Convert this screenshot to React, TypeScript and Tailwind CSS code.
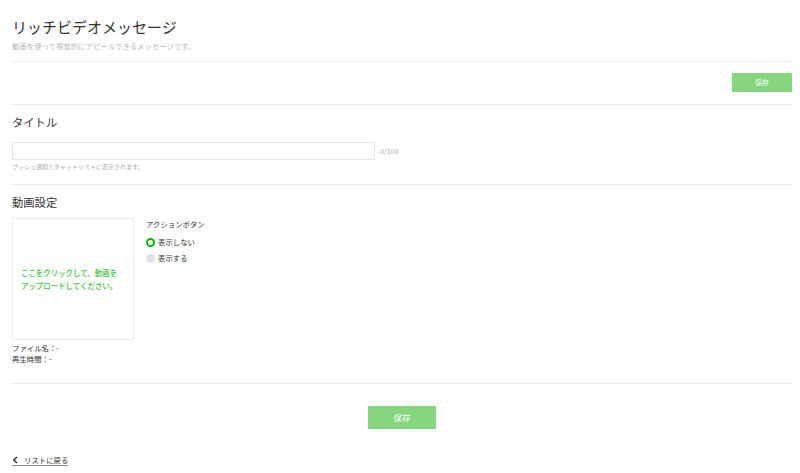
import React from "react";

const font = { fontFamily: '"Noto Sans CJK JP", "Noto Sans", sans-serif' };

function Radio({ checked, label }: { checked: boolean; label: string }) {
  return (
    <div className="flex items-center h-[16px]">
      {checked ? (
        <span className="w-[9px] h-[9px] rounded-full border-[2.5px] border-[#00b900] bg-white box-border" />
      ) : (
        <span className="w-[9px] h-[9px] rounded-full bg-[#dfe2e8]" />
      )}
      <span className="ml-[3px] text-[7.4px] leading-[10px] text-[#333]">{label}</span>
    </div>
  );
}

export default function App() {
  return (
    <div style={font} className="w-[800px] h-[473px] bg-white overflow-hidden pl-[12px] pr-[8px] text-[#333] leading-none">
      <div className="pt-[17px]">
        <h1 className="text-[15px] leading-[20px] font-normal text-[#333]">リッチビデオメッセージ</h1>
        <p className="mt-[4px] text-[7.4px] leading-[10px] text-[#b4b9c0]">動画を使って視覚的にアピールできるメッセージです。</p>
      </div>
      <div className="mt-[10px] border-t border-[#efefef]" />
      <div className="flex justify-end pt-[11px] pb-[12px]">
        <button className="w-[60px] h-[19px] bg-[#86d57f] text-white text-[7px] leading-[19px]">保存</button>
      </div>
      <div className="border-t border-[#efefef]" />
      <div className="pt-[9px]">
        <h2 className="text-[11.3px] leading-[16px] text-[#333]">タイトル</h2>
        <div className="mt-[12px] flex items-center">
          <div className="w-[363px] h-[18px] border border-[#e6e6e6] bg-white" />
          <span className="ml-[5px] text-[7px] leading-[10px] text-[#a8a8a8]">0/100</span>
        </div>
        <p className="mt-[3px] text-[6px] leading-[8px] text-[#a8adb3]">プッシュ通知とチャットリストに表示されます。</p>
      </div>
      <div className="mt-[13px] border-t border-[#efefef]" />
      <div className="pt-[9px]">
        <h2 className="text-[11.3px] leading-[16px] text-[#333]">動画設定</h2>
        <div className="mt-[8px] flex">
          <div>
            <div className="w-[122px] h-[122px] border border-[#ececec] flex items-center px-[8px]">
              <p className="text-[7.45px] leading-[13px] text-[#3dc13d] font-medium">
                ここをクリックして、動画を
                <br />
                アップロードしてください。
              </p>
            </div>
            <div className="mt-[2px] text-[7.4px] leading-[11px] text-[#333]">
              <p>ファイル名：-</p>
              <p>再生時間：-</p>
            </div>
          </div>
          <div className="ml-[12px]">
            <p className="text-[7.4px] leading-[12px] text-[#333]">アクションボタン</p>
            <div className="mt-[4px]">
              <Radio checked label="表示しない" />
              <Radio checked={false} label="表示する" />
            </div>
          </div>
        </div>
      </div>
      <div className="mt-[19px] border-t border-[#efefef]" />
      <div className="mt-[22px] flex justify-center">
        <button className="w-[68px] h-[23px] bg-[#86d57f] text-white text-[8.5px] leading-[23px]">保存</button>
      </div>
      <div className="mt-[25px] flex">
        <a className="flex items-center text-[7.4px] leading-[11px] text-[#333] border-b border-[#888]">
          <svg width="7" height="8" viewBox="0 0 7 8" className="mr-[5px]">
            <path d="M5 1 L1.8 4 L5 7" fill="none" stroke="#333" strokeWidth="1.5" />
          </svg>
          リストに戻る
        </a>
      </div>
    </div>
  );
}
